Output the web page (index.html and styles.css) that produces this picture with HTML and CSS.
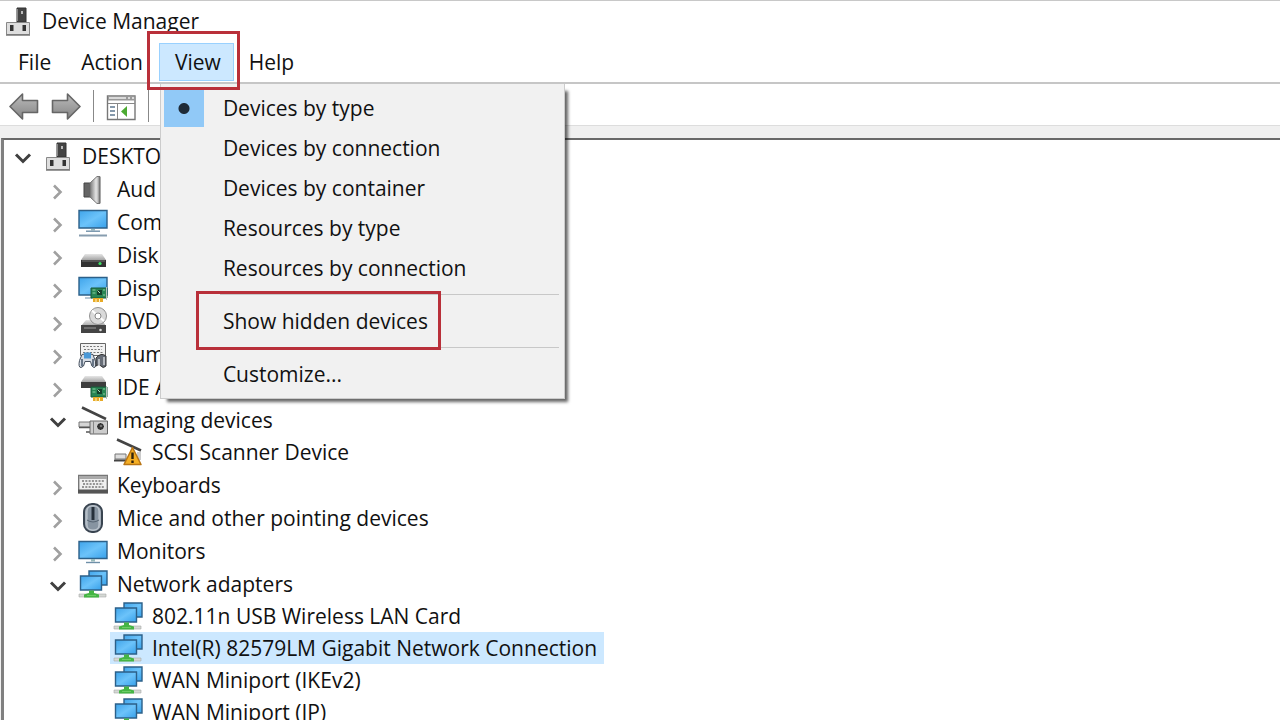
FILE: index.html
```html
<!DOCTYPE html>
<html lang="en">

<head>
  <meta charset="UTF-8">
  <meta name="viewport" content="width=device-width, initial-scale=1.0">
  <title>Device Manager</title>
  <link rel="stylesheet" href="styles.css">
</head>

<body>

  <svg class="sprite" aria-hidden="true">
    <defs>
      <linearGradient id="screen" x1="0" y1="0" x2="1" y2="1">
        <stop offset="0" stop-color="#3fa4ea"/>
        <stop offset="0.5" stop-color="#6cc3fa"/>
        <stop offset="1" stop-color="#36a0ea"/>
      </linearGradient>
      <linearGradient id="metal" x1="0" y1="0" x2="1" y2="0">
        <stop offset="0" stop-color="#777"/>
        <stop offset="0.6" stop-color="#e4e4e4"/>
        <stop offset="1" stop-color="#999"/>
      </linearGradient>
      <linearGradient id="lid" x1="0" y1="0" x2="0" y2="1">
        <stop offset="0" stop-color="#e6e6e6"/>
        <stop offset="1" stop-color="#a4a4a4"/>
      </linearGradient>
      <linearGradient id="arrow" x1="0" y1="0" x2="0" y2="1">
        <stop offset="0" stop-color="#bbb"/>
        <stop offset="1" stop-color="#858585"/>
      </linearGradient>
    </defs>

    <symbol id="closed" viewBox="0 0 22 30">
      <path d="M7 11.500 13.500 18 7 24.500" fill="none" stroke="#a0a0a0" stroke-width="2.600"/>
    </symbol>
    <symbol id="open" viewBox="0 0 22 30">
      <path d="M4 13.500 11 20.500 18 13.500" fill="none" stroke="#404040" stroke-width="3"/>
    </symbol>

    <symbol id="device" viewBox="0 0 30 30">
      <path d="M14 2h9v14h-9z" fill="#444" stroke="#333"/>
      <path d="M14.500 3v12" stroke="#888"/>
      <path d="M18 5h2v3h-2z" fill="#bbb"/>
      <path d="M3.500 16.500h23v12h-23z" fill="#dedede" stroke="#888"/>
      <path d="M3 29h24" stroke="#777" stroke-width="1.500"/>
      <path d="M7 19h3.500v6H7zM19.500 19H23v6h-3.500z" fill="#333"/>
    </symbol>
    <symbol id="audio" viewBox="0 0 30 30">
      <path d="M6 9h6v14h-6z" fill="#666" stroke="#444"/>
      <path d="M12 9 19 2.500h3v27h-3L12 23z" fill="url(#metal)" stroke="#777"/>
      <path d="M21.500 3v26" stroke="#777" stroke-width="1.500"/>
    </symbol>
    <symbol id="computer" viewBox="0 0 30 30">
      <path d="M1 3.500h28v17.500H1z" fill="url(#screen)" stroke="#2c6089" stroke-width="1.400"/>
      <path d="M13 22h4v1.500h-4z" fill="#9bb"/>
      <path d="M8 24.200h14" stroke="#6f8fa8" stroke-width="1.400"/>
      <path d="M1 28.500h28" stroke="#879daf" stroke-width="2"/>
    </symbol>
    <symbol id="monitor" viewBox="0 0 30 30">
      <path d="M1 5.500h28v17H1z" fill="url(#screen)" stroke="#2c6089" stroke-width="1.400"/>
      <path d="M13 23h4v2.500h-4z" fill="#9bb"/>
      <path d="M8 26.500h14" stroke="#6f8fa8" stroke-width="1.400"/>
    </symbol>
    <symbol id="disk" viewBox="0 0 30 30">
      <path d="M7 14h17l4 6H3z" fill="url(#lid)"/>
      <path d="M3 20h25v7H3z" fill="#333"/>
      <path d="M4 21h23" stroke="#777"/>
      <circle cx="22" cy="23.500" r="1.600" fill="#3ee066"/>
    </symbol>
    <symbol id="card" viewBox="0 0 18 16">
      <path d="M1 1h16v10H1z" fill="#298554" stroke="#195a38"/>
      <path d="M2.500 3h3M2.500 6h3M13 3h2M13 8h2" stroke="#8fd2a2"/>
      <path d="M7 3h5v5H7z" fill="#15402b"/>
      <path d="M7.500 3.500 10 6" stroke="#b4e7c0"/>
      <path d="M16.500 0v13" stroke="#b9c2bc"/>
      <path d="M3 11h10v4H3z" fill="#e7aa27"/>
      <path d="M6 12v4M9.500 12v4" stroke="#fff2c8"/>
    </symbol>
    <symbol id="display" viewBox="0 0 30 30">
      <path d="M1 4.500h28v17.500H1z" fill="url(#screen)" stroke="#2c6089" stroke-width="1.400"/>
      <path d="M7 25h7" stroke="#6f8fa8"/>
      <use href="#card" x="12" y="14" width="18" height="16"/>
    </symbol>
    <symbol id="dvd" viewBox="0 0 30 30">
      <path d="M8 14h16l4 6H3z" fill="url(#lid)"/>
      <circle cx="20" cy="10" r="8.500" fill="#dadada" stroke="#929292"/>
      <path d="M20 10 14 4.500M20 10l6 5" stroke="#fff" stroke-width="2"/>
      <circle cx="20" cy="10" r="3" fill="#fff" stroke="#888"/>
      <path d="M3 19h25v8H3z" fill="#444"/>
      <path d="M6 22h12" stroke="#999"/>
      <circle cx="22.500" cy="24" r="1.300" fill="#d8d8d8"/>
    </symbol>
    <symbol id="hid" viewBox="0 0 30 30">
      <path d="M2.500 4.500h25v12h-25z" fill="#f2f2f2" stroke="#666"/>
      <path d="M5 7.500h20M6 10.500h18M5 13.500h20" stroke="#777" stroke-dasharray="2 1.500"/>
      <path d="M4 15.500q5-2 11 0l2.500 7q1 6-1.500 6t-3.500-6H7q-1 6-4 6t-1.500-7z" fill="#d5dbe3" stroke="#46505e"/>
      <path d="M6 13.500h7v6H6z" fill="#4998d7"/>
      <path d="M4 20v7M15 20v7" stroke="#697788" stroke-width="2"/>
      <path d="M18 19q5-6 10-2v10q-3 3-5 0t-5 0z" fill="#676d77" stroke="#333"/>
      <path d="M21 20v7M26 18v8" stroke="#d2d5da" stroke-width="1.500"/>
    </symbol>
    <symbol id="ide" viewBox="0 0 30 30">
      <path d="M7 4h17l4 6H3z" fill="url(#lid)"/>
      <path d="M3 10h25v6H3z" fill="#3d3d3d"/>
      <use href="#card" x="12" y="14" width="18" height="16"/>
    </symbol>
    <symbol id="imaging" viewBox="0 0 30 30">
      <path d="M4 2.500 28 14" stroke="#444" stroke-width="2.500"/>
      <path d="M1 17h12v5H1z" fill="#d5d5d5" stroke="#777"/>
      <path d="M1 22.500h11M8 27h6" stroke="#555" stroke-width="1.500"/>
      <path d="M12 16h17.500v13H12z" fill="#ccc" stroke="#666"/>
      <path d="M15.500 16v13" stroke="#888"/>
      <circle cx="22.500" cy="21.500" r="4" fill="#333" stroke="#eee"/>
      <circle cx="23" cy="21" r="1.300" fill="#777"/>
    </symbol>
    <symbol id="scanner" viewBox="0 0 30 30">
      <path d="M4 2.500 28 13.500" stroke="#444" stroke-width="2.500"/>
      <path d="M2 17h11v5H2z" fill="#ddd" stroke="#777"/>
      <path d="M1 23.500h12" stroke="#444" stroke-width="2"/>
      <path d="M24 15h4v8h-4z" fill="#ccc"/>
      <path d="M19.500 10.500 28 27.500H11z" fill="#f5af25" stroke="#b97514" stroke-width="1.500" stroke-linejoin="round"/>
      <path d="M19.500 15.500v6.500M19.500 23.500v2.500" stroke="#33230b" stroke-width="2.400"/>
    </symbol>
    <symbol id="keyboard" viewBox="0 0 30 30">
      <path d="M.7 5.500h28.600v17H.7z" fill="#f0f0f0" stroke="#777" stroke-width="1.400"/>
      <path d="M1 6h28v3H1z" fill="#aaa"/>
      <path d="M4 11h22M5 14h20M4 17h22" stroke="#777" stroke-width="1.400" stroke-dasharray="2 1.300"/>
      <path d="M0 19.500h30v4H0z" fill="#555"/>
    </symbol>
    <symbol id="mouse" viewBox="0 0 30 30">
      <rect x="6" y="1" width="18" height="28" rx="8" fill="#a5afba" stroke="#394450" stroke-width="2"/>
      <rect x="9" y="3" width="12" height="24" rx="5" fill="#8794a1" stroke="#c6ced5"/>
      <path d="M9 17q6 4 12 0" fill="none" stroke="#566472"/>
      <path d="M15 4v13" stroke="#26303a" stroke-width="3"/>
    </symbol>
    <symbol id="network" viewBox="0 0 30 30">
      <path d="M11 2h18v14H11z" fill="url(#screen)" stroke="#2c6089" stroke-width="1.400"/>
      <path d="M2.500 7h21v14h-21z" fill="url(#screen)" stroke="#2c6089" stroke-width="1.400"/>
      <path d="M1 25h27v3H1z" fill="#d5d9d5" stroke="#aaa" stroke-width=".6"/>
      <path d="M11 21.500h5V24l5 1.500v3H6v-3l5-1.500z" fill="#45b545"/>
      <path d="M9 26.500h9" stroke="#6dcc66"/>
    </symbol>

    <symbol id="back" viewBox="0 0 30 30">
      <path d="M1 15.500 13.500 3v6.500h15v12h-15V28z" fill="url(#arrow)" stroke="#666" stroke-width="1.600" stroke-linejoin="round"/>
    </symbol>
    <symbol id="forward" viewBox="0 0 30 30">
      <path d="M29 15.500 16.500 3v6.500h-15v12h15V28z" fill="url(#arrow)" stroke="#666" stroke-width="1.600" stroke-linejoin="round"/>
    </symbol>
    <symbol id="console" viewBox="0 0 30 30">
      <path d="M1.500 5h27.500v23.500H1.500z" fill="#fff" stroke="#777" stroke-width="1.400"/>
      <path d="M2 7.500h27" stroke="#999" stroke-width="4"/>
      <path d="M3 7h17M22 7h2M26 7h2" stroke="#eee" stroke-width="1.500"/>
      <path d="M2 12.500h27M11.500 13v15" stroke="#888"/>
      <path d="M4 16h5M4 20h5M4 24h5" stroke="#5f7890" stroke-width="1.600"/>
      <path d="M21 15v11L15 20.500z" fill="#4caa32"/>
    </symbol>
  </svg>

  <header class="titlebar">
    <svg class="icon"><use href="#device"/></svg>
    <h1>Device Manager</h1>
  </header>

  <nav class="menubar">
    <button>File</button>
    <button>Action</button>
    <div class="menu">
      <button class="active">View</button>
      <div class="popup">
        <button><span class="check"></span>Devices by type</button>
        <button>Devices by connection</button>
        <button>Devices by container</button>
        <button>Resources by type</button>
        <button>Resources by connection</button>
        <hr>
        <button class="marked">Show hidden devices</button>
        <hr>
        <button>Customize...</button>
      </div>
    </div>
    <button>Help</button>
  </nav>

  <div class="toolbar">
    <button aria-label="Back"><svg class="icon"><use href="#back"/></svg></button>
    <button aria-label="Forward"><svg class="icon"><use href="#forward"/></svg></button>
    <span class="divider"></span>
    <button aria-label="Console tree"><svg class="icon"><use href="#console"/></svg></button>
    <span class="divider"></span>
  </div>

  <main class="tree">
    <ul>
      <li>
        <div class="row">
          <button class="toggle" aria-label="Collapse"><svg><use href="#open"/></svg></button>
          <span class="node"><svg class="icon"><use href="#device"/></svg>DESKTO</span>
        </div>
        <ul>
          <li class="row">
            <button class="toggle" aria-label="Expand"><svg><use href="#closed"/></svg></button>
            <span class="node"><svg class="icon"><use href="#audio"/></svg>Aud</span>
          </li>
          <li class="row">
            <button class="toggle" aria-label="Expand"><svg><use href="#closed"/></svg></button>
            <span class="node"><svg class="icon"><use href="#computer"/></svg>Com</span>
          </li>
          <li class="row">
            <button class="toggle" aria-label="Expand"><svg><use href="#closed"/></svg></button>
            <span class="node"><svg class="icon"><use href="#disk"/></svg>Disk</span>
          </li>
          <li class="row">
            <button class="toggle" aria-label="Expand"><svg><use href="#closed"/></svg></button>
            <span class="node"><svg class="icon"><use href="#display"/></svg>Disp</span>
          </li>
          <li class="row">
            <button class="toggle" aria-label="Expand"><svg><use href="#closed"/></svg></button>
            <span class="node"><svg class="icon"><use href="#dvd"/></svg>DVD</span>
          </li>
          <li class="row">
            <button class="toggle" aria-label="Expand"><svg><use href="#closed"/></svg></button>
            <span class="node"><svg class="icon"><use href="#hid"/></svg>Hum</span>
          </li>
          <li class="row">
            <button class="toggle" aria-label="Expand"><svg><use href="#closed"/></svg></button>
            <span class="node"><svg class="icon"><use href="#ide"/></svg>IDE A</span>
          </li>
          <li>
            <div class="row">
              <button class="toggle" aria-label="Collapse"><svg><use href="#open"/></svg></button>
              <span class="node"><svg class="icon"><use href="#imaging"/></svg>Imaging devices</span>
            </div>
            <ul>
              <li class="row leaf">
                <span class="node"><svg class="icon"><use href="#scanner"/></svg>SCSI Scanner Device</span>
              </li>
            </ul>
          </li>
          <li class="row">
            <button class="toggle" aria-label="Expand"><svg><use href="#closed"/></svg></button>
            <span class="node"><svg class="icon"><use href="#keyboard"/></svg>Keyboards</span>
          </li>
          <li class="row">
            <button class="toggle" aria-label="Expand"><svg><use href="#closed"/></svg></button>
            <span class="node"><svg class="icon"><use href="#mouse"/></svg>Mice and other pointing devices</span>
          </li>
          <li class="row">
            <button class="toggle" aria-label="Expand"><svg><use href="#closed"/></svg></button>
            <span class="node"><svg class="icon"><use href="#monitor"/></svg>Monitors</span>
          </li>
          <li>
            <div class="row">
              <button class="toggle" aria-label="Collapse"><svg><use href="#open"/></svg></button>
              <span class="node"><svg class="icon"><use href="#network"/></svg>Network adapters</span>
            </div>
            <ul>
              <li class="row leaf">
                <span class="node"><svg class="icon"><use href="#network"/></svg>802.11n USB Wireless LAN Card</span>
              </li>
              <li class="row leaf">
                <span class="node selected"><svg class="icon"><use href="#network"/></svg>Intel(R) 82579LM Gigabit Network Connection</span>
              </li>
              <li class="row leaf">
                <span class="node"><svg class="icon"><use href="#network"/></svg>WAN Miniport (IKEv2)</span>
              </li>
              <li class="row leaf">
                <span class="node"><svg class="icon"><use href="#network"/></svg>WAN Miniport (IP)</span>
              </li>
            </ul>
          </li>
        </ul>
      </li>
    </ul>
  </main>

</body>

</html>
```
FILE: styles.css
```css
*,
*::before {
  box-sizing: border-box;
}

body {
  margin: 0;
  height: 100vh;
  display: flex;
  flex-direction: column;
  overflow: hidden;
  background-color: #f0f0f0;
  border-top: 1px solid #c8c8c8;
  color: #111;
  font-family: "Open Sans", "Noto Sans", sans-serif;
  font-size: 21px;
  line-height: 30px;
}

button {
  font: inherit;
  color: inherit;
  background: none;
  border: none;
  padding: 0;
  white-space: nowrap;
}

.sprite {
  position: absolute;
  width: 0;
  height: 0;
}

.icon {
  display: block;
  flex: none;
  width: 30px;
  height: 30px;
}

.titlebar {
  display: flex;
  align-items: center;
  gap: 9px;
  height: 40px;
  padding-left: 3px;
  background-color: #fff;
}

h1 {
  margin: 0;
  font-size: 21px;
  font-weight: normal;
}

.menubar {
  display: flex;
  align-items: center;
  height: 43px;
  padding-left: 3px;
  background-color: #fff;
  border-bottom: 2px solid #c6c6c6;
}

.menubar > button {
  height: 38px;
  padding: 0 15px;
}

.menu {
  position: relative;
  margin-left: 1px;
}

.active {
  display: block;
  height: 38px;
  padding: 0 12px 0 15px;
  background-color: #cce8ff;
  border: 1px solid #99d1ff;
}

/* red frames around the steps to click */
.menu::before,
.marked::before {
  content: "";
  position: absolute;
  z-index: 2;
  border: 3px solid #b9303a;
}

.menu::before {
  inset: -12px -6px -9px -12px;
}

.marked::before {
  top: -10px;
  left: 32px;
  width: 245px;
  height: 59px;
}

.popup {
  position: absolute;
  z-index: 1;
  top: 41px;
  left: 1px;
  width: 405px;
  padding: 4px 3px;
  background-color: #f1f1f1;
  border: 1px solid #ccc;
  border-top: none;
  box-shadow: 5px 5px 3px -2px rgba(0, 0, 0, 0.6);
}

.popup button {
  position: relative;
  display: block;
  width: 100%;
  height: 40px;
  padding-left: 59px;
  text-align: left;
}

.popup hr {
  height: 1px;
  margin: 6px 2px 6px 56px;
  border: none;
  background-color: #c8c8c8;
}

.check {
  position: absolute;
  top: 2px;
  left: 0;
  width: 40px;
  height: 37px;
  background: radial-gradient(circle, #1e2b38 5px, #91c9f7 6px);
}

.toolbar {
  display: flex;
  align-items: center;
  gap: 12px;
  height: 42px;
  padding: 2px 9px 0;
  background-color: #fff;
  border-bottom: 1px solid #ddd;
}

.divider {
  width: 1px;
  height: 32px;
  background-color: #888;
}

.tree {
  flex: 1;
  min-height: 0;
  margin: 12px 0 0 1px;
  overflow: hidden;
  background-color: #fff;
  border-top: 2px solid #696969;
  border-left: 3px solid #808080;
}

ul {
  margin: 0;
  padding: 0;
  list-style: none;
}

.tree > ul {
  margin-top: -1px;
  padding-left: 8px;
}

ul ul {
  padding-left: 35px;
}

.row {
  display: flex;
  align-items: center;
  height: 33px;
}

.toggle,
.toggle svg {
  display: block;
  width: 22px;
  height: 30px;
}

.toggle {
  margin-right: 6px;
}

.leaf {
  height: 32px;
  padding-left: 28px;
}

.node {
  display: flex;
  align-items: center;
  gap: 9px;
  height: 100%;
  padding: 0 7px 0 3px;
  white-space: nowrap;
}

.selected {
  background-color: #cce8ff;
}
```
